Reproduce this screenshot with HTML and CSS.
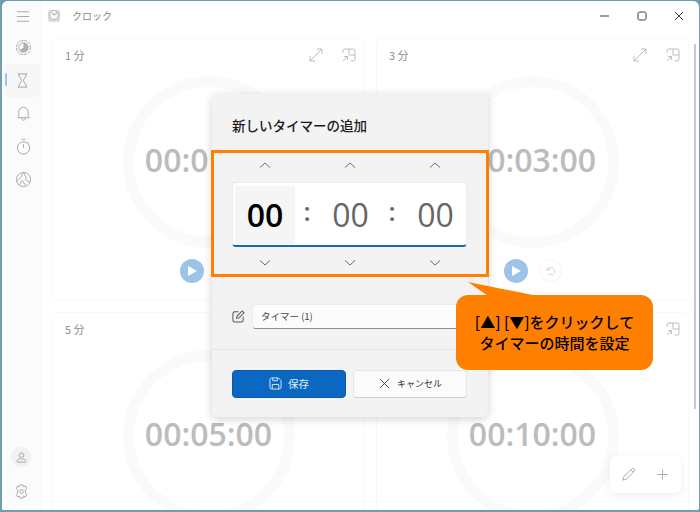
FILE: index.html
```html
<!DOCTYPE html>
<html lang="ja">
<head>
<meta charset="utf-8">
<title>クロック</title>
<link rel="stylesheet" href="styles.css">
</head>
<body>
<div class="window">
  <nav class="sidebar">
    <div class="nav-item nav-menu">
      <svg class="ico" viewBox="0 0 18 18"><path d="M2 4h13M2 9h13M2 14h13"/></svg>
    </div>
    <div class="nav-item">
      <svg class="ico" viewBox="0 0 18 18"><circle cx="9" cy="9" r="7.5" stroke-dasharray="3 1"/><circle cx="9" cy="9" r="5"/><path class="solid" d="M9 4a5 5 0 0 1 0 10 5 5 0 0 1-4-2l4-3z"/></svg>
    </div>
    <div class="nav-item active">
      <svg class="ico" viewBox="0 0 18 18"><path d="M4 2h10M4 16h10M5 2c0 4 3 5 3 7s-3 3-3 7M13 2c0 4-3 5-3 7s3 3 3 7"/></svg>
    </div>
    <div class="nav-item">
      <svg class="ico" viewBox="0 0 18 18"><path d="M3 13.5c1.500-1.500 1-3 1-6a5 5 0 0 1 10 0c0 3-.5 4.500 1 6zM7 13.500c0 3.500 4 3.500 4 0"/></svg>
    </div>
    <div class="nav-item">
      <svg class="ico" viewBox="0 0 18 18"><circle cx="9" cy="10.500" r="6.500"/><path d="M7 1.500h4M9 10.500V6.500M14 4.500l1 1"/></svg>
    </div>
    <div class="nav-item">
      <svg class="ico" viewBox="0 0 18 18"><circle cx="9" cy="9" r="7.500"/><path d="M9 1.500 6 7l-4 4M9 1.500 12 7l-1 2 4.500 3M4.500 15l3-5 4 5.500"/></svg>
    </div>
    <div class="nav-bottom">
      <div class="nav-user">
        <svg class="ico ico-sm" viewBox="0 0 14 14"><circle cx="7" cy="4.500" r="2.500"/><path d="M2.500 12c-1-3 1.500-3.500 4.500-3.500s5.500.5 4.500 3.500z"/></svg>
      </div>
      <div class="nav-gear">
        <svg class="ico" viewBox="0 0 18 18"><circle cx="9" cy="9" r="2"/><path d="M7.500 2h3l.5 2 2-.8 1.600 2.600-1.500 1.400v3.600l1.500 1.400-1.600 2.600-2-.8-.5 2h-3l-.5-2-2 .8-1.600-2.600 1.500-1.400V7.200L3.400 5.800 5 3.200l2 .8z"/></svg>
      </div>
    </div>
  </nav>

  <div class="main">
    <header class="titlebar">
      <div class="app-icon"><svg viewBox="0 0 14 14"><rect x="1" y="1" width="12" height="12" rx="2"/><circle cx="7" cy="6" r="4.500"/><path d="M7 6 5 3.500M7 6l3-2"/></svg></div>
      <span class="app-name">クロック</span>
      <div class="win-controls">
        <svg class="win-btn" viewBox="0 0 12 12"><path d="M1 6h9"/></svg>
        <svg class="win-btn" viewBox="0 0 12 12"><rect x="2" y="2" width="8" height="8" rx="1.500"/></svg>
        <svg class="win-btn" viewBox="0 0 12 12"><path d="M2 2l8 8M10 2l-8 8"/></svg>
      </div>
    </header>

    <div class="cards">
      <section class="card">
        <div class="card-head">
          <span class="card-title">1 分</span>
          <svg class="card-ico" viewBox="0 0 14 14"><path d="M1 13 13 1M8 1h5v5M1 8v5h5"/></svg>
          <svg class="card-ico" viewBox="0 0 14 14"><path d="M1 5V3a2 2 0 0 1 2-2h8a2 2 0 0 1 2 2v8a2 2 0 0 1-2 2H8.500M7 1v6h6M1 13l4-4M2 8.500h3.500V12"/></svg>
        </div>
        <div class="ring"><span class="time">00:01:00</span></div>
        <div class="card-actions">
          <span class="play"><i class="tri"></i></span>
          <span class="reset"><svg viewBox="0 0 12 12"><path d="M3 5.500a4 4 0 1 1 .5 3.500M2.500 2.500v3h3"/></svg></span>
        </div>
      </section>
      <section class="card">
        <div class="card-head">
          <span class="card-title">3 分</span>
          <svg class="card-ico" viewBox="0 0 14 14"><path d="M1 13 13 1M8 1h5v5M1 8v5h5"/></svg>
          <svg class="card-ico" viewBox="0 0 14 14"><path d="M1 5V3a2 2 0 0 1 2-2h8a2 2 0 0 1 2 2v8a2 2 0 0 1-2 2H8.500M7 1v6h6M1 13l4-4M2 8.500h3.500V12"/></svg>
        </div>
        <div class="ring"><span class="time">00:03:00</span></div>
        <div class="card-actions">
          <span class="play"><i class="tri"></i></span>
          <span class="reset"><svg viewBox="0 0 12 12"><path d="M3 5.500a4 4 0 1 1 .5 3.500M2.500 2.500v3h3"/></svg></span>
        </div>
      </section>
      <section class="card">
        <div class="card-head">
          <span class="card-title">5 分</span>
          <svg class="card-ico" viewBox="0 0 14 14"><path d="M1 13 13 1M8 1h5v5M1 8v5h5"/></svg>
          <svg class="card-ico" viewBox="0 0 14 14"><path d="M1 5V3a2 2 0 0 1 2-2h8a2 2 0 0 1 2 2v8a2 2 0 0 1-2 2H8.500M7 1v6h6M1 13l4-4M2 8.500h3.500V12"/></svg>
        </div>
        <div class="ring"><span class="time">00:05:00</span></div>
      </section>
      <section class="card">
        <div class="card-head">
          <span class="card-title">10 分</span>
          <svg class="card-ico" viewBox="0 0 14 14"><path d="M1 13 13 1M8 1h5v5M1 8v5h5"/></svg>
          <svg class="card-ico" viewBox="0 0 14 14"><path d="M1 5V3a2 2 0 0 1 2-2h8a2 2 0 0 1 2 2v8a2 2 0 0 1-2 2H8.500M7 1v6h6M1 13l4-4M2 8.500h3.500V12"/></svg>
        </div>
        <div class="ring"><span class="time">00:10:00</span></div>
      </section>
    </div>
  </div>

  <div class="scrollbar"></div>

  <div class="float-bar">
    <svg class="float-ico" viewBox="0 0 16 16"><path d="M2 14l.8-3.500L11.500 2a1.500 1.500 0 0 1 2.500 2.500L5.500 13.200zM10.500 3l2.500 2.500"/></svg>
    <svg class="float-ico" viewBox="0 0 16 16"><path d="M8 2.500v11M2.500 8h11"/></svg>
  </div>
</div>

<div class="dialog">
  <h2 class="dialog-title">新しいタイマーの追加</h2>
  <div class="chev-row">
    <svg class="chev" viewBox="0 0 12 8"><path d="M1 6.500 6 2l5 4.500"/></svg>
    <svg class="chev" viewBox="0 0 12 8"><path d="M1 6.500 6 2l5 4.500"/></svg>
    <svg class="chev" viewBox="0 0 12 8"><path d="M1 6.500 6 2l5 4.500"/></svg>
  </div>
  <div class="picker">
    <span class="digit digit-on">00</span>
    <span class="colon">:</span>
    <span class="digit">00</span>
    <span class="colon">:</span>
    <span class="digit">00</span>
  </div>
  <div class="chev-row chev-low">
    <svg class="chev" viewBox="0 0 12 8"><path d="M1 1.500 6 6l5-4.500"/></svg>
    <svg class="chev" viewBox="0 0 12 8"><path d="M1 1.500 6 6l5-4.500"/></svg>
    <svg class="chev" viewBox="0 0 12 8"><path d="M1 1.500 6 6l5-4.500"/></svg>
  </div>
  <div class="name-row">
    <svg class="name-ico" viewBox="0 0 14 14"><path d="M7 2H3a2 2 0 0 0-2 2v7a2 2 0 0 0 2 2h7a2 2 0 0 0 2-2V7M5 9l.5-2.500L11 1l2 2-5.500 5.500z"/></svg>
    <div class="name-input">タイマー (1)</div>
  </div>
  <div class="dialog-foot">
    <button class="btn btn-save">
      <svg class="btn-ico" viewBox="0 0 14 14"><path d="M1 3a2 2 0 0 1 2-2h7l3 3v7a2 2 0 0 1-2 2H3a2 2 0 0 1-2-2zM4 1v3h5V1M3.500 13V8h7v5"/></svg>
      保存
    </button>
    <button class="btn btn-cancel">
      <svg class="btn-ico" viewBox="0 0 14 14"><path d="M2 2l10 10M12 2 2 12"/></svg>
      キャンセル
    </button>
  </div>
</div>

<div class="highlight"></div>

<div class="callout">
  <svg class="callout-tail" viewBox="0 0 70 14"><polygon points="0,0 70,14 20,14"/></svg>
  [▲] [▼]をクリックして<br>タイマーの時間を設定
</div>
</body>
</html>
```

FILE: styles.css
```css
* {
  box-sizing: border-box;
}

body {
  margin: 0;
  width: 700px;
  height: 512px;
  overflow: hidden;
  position: relative;
  background-color: #6f9fae;
  font-family: "Noto Sans CJK JP", "Noto Sans", sans-serif;
}

svg {
  display: block;
  fill: none;
}

/* window */
.window {
  position: relative;
  display: flex;
  height: 509px;
  margin: 1px 1px 2px 2px;
  border-radius: 6px 6px 2px 2px;
  overflow: hidden;
  background-color: #fff;
}

.sidebar {
  display: flex;
  flex-direction: column;
  width: 40px;
  flex: none;
  background-color: #fbfbfb;
}

.nav-item {
  display: flex;
  align-items: center;
  justify-content: center;
  position: relative;
  height: 33px;
  padding-left: 2px;
}

.nav-menu {
  height: 30px;
}

.nav-item.active {
  background-color: #f6f6f6;
  border-radius: 4px;
  margin-left: 3px;
  margin-right: 2px;
  padding-left: 0;
}

.nav-item.active::before {
  content: "";
  position: absolute;
  left: 0;
  top: 9px;
  width: 2px;
  height: 13px;
  border-radius: 1px;
  background-color: #9cc6ee;
}

.ico {
  width: 17px;
  height: 17px;
}

.ico path,
.ico circle {
  stroke: #a5a5a5;
  stroke-width: 1;
}

.ico path.solid {
  fill: #b0b0b0;
  stroke: none;
}

.ico-sm {
  width: 13px;
  height: 13px;
}

.nav-bottom {
  margin-top: auto;
  padding-left: 9px;
  padding-bottom: 10px;
}

.nav-user {
  display: flex;
  align-items: center;
  justify-content: center;
  width: 20px;
  height: 20px;
  border-radius: 50%;
  background-color: #f1f1f1;
}

.nav-gear {
  margin-top: 16px;
  padding-left: 2px;
}

.main {
  flex: 1;
  min-width: 0;
}

.titlebar {
  display: flex;
  align-items: center;
  height: 37px;
  padding-left: 5px;
  padding-bottom: 8px;
}

.app-icon svg {
  width: 14px;
  height: 14px;
}

.app-icon rect {
  fill: #dcdcdc;
}

.app-icon circle {
  fill: #f7f7f7;
  stroke: #b5b5b5;
}

.app-icon path {
  stroke: #999;
}

.app-name {
  margin-left: 11px;
  font-size: 10px;
  color: #8a8a8a;
}

.win-controls {
  display: flex;
  gap: 25px;
  margin-left: auto;
  padding-right: 14px;
}

.win-btn {
  width: 12px;
  height: 12px;
}

.win-btn path,
.win-btn rect {
  stroke: #3c3c3c;
  stroke-width: 1;
}

/* timer cards */
.cards {
  display: grid;
  grid-template-columns: 313px 313px;
  grid-auto-rows: 263px;
  gap: 11px;
  padding-left: 10px;
}

.card {
  display: flex;
  flex-direction: column;
  align-items: center;
  border: 1px solid #f8f8f8;
  border-radius: 6px;
  background-color: #fff;
}

.card-head {
  display: flex;
  align-items: flex-start;
  align-self: stretch;
  height: 37px;
  padding: 9px 8px 0 12px;
  gap: 19px;
}

.card-title {
  margin-right: auto;
  font-size: 11px;
  line-height: 14px;
  color: #8c8c8c;
}

.card-ico {
  width: 14px;
  height: 14px;
}

.card-ico path {
  stroke: #bdbdbd;
  stroke-width: 1;
}

.ring {
  display: flex;
  align-items: center;
  justify-content: center;
  width: 172px;
  height: 172px;
  flex: none;
  padding-bottom: 6px;
  border: 11px solid #fafafa;
  border-radius: 50%;
}

.time {
  font-family: "Open Sans", sans-serif;
  font-size: 32px;
  font-weight: 600;
  white-space: nowrap;
  color: #bcbcbc;
}

.card-actions {
  display: flex;
  gap: 11px;
  margin-top: 11px;
}

.play {
  display: flex;
  align-items: center;
  justify-content: center;
  width: 24px;
  height: 24px;
  border-radius: 50%;
  background-color: #9dc4e8;
}

.tri {
  margin-left: 2px;
  border-left: 9px solid #fff;
  border-top: 5.500px solid transparent;
  border-bottom: 5.500px solid transparent;
}

.reset {
  display: flex;
  align-items: center;
  justify-content: center;
  width: 23px;
  height: 23px;
  border: 1px solid #f6f6f6;
  border-radius: 50%;
}

.reset svg {
  width: 11px;
  height: 11px;
}

.reset path {
  stroke: #cdcdcd;
}

.scrollbar {
  position: absolute;
  left: 692px;
  top: 43px;
  width: 2px;
  height: 365px;
  background-color: #c8c8c8;
}

.float-bar {
  position: absolute;
  left: 608px;
  top: 455px;
  display: flex;
  align-items: center;
  justify-content: center;
  gap: 19px;
  width: 71px;
  height: 37px;
  border-radius: 6px;
  background-color: #fff;
  box-shadow: 0 2px 8px rgba(0, 0, 0, 0.08);
}

.float-ico {
  width: 15px;
  height: 15px;
}

.float-ico path {
  stroke: #a8a8a8;
}

/* dialog */
.dialog {
  position: absolute;
  left: 212px;
  top: 94px;
  width: 276px;
  height: 323px;
  padding-top: 19px;
  border-radius: 6px;
  background-color: #f3f3f3;
  box-shadow: 0 2px 10px rgba(0, 0, 0, 0.18);
}

.dialog-title {
  margin: 0 0 18px 20px;
  font-size: 13.500px;
  font-weight: 500;
  line-height: 24px;
  color: #1b1b1b;
}

.chev-row {
  display: grid;
  grid-template-columns: 85px 85px 85px;
  justify-items: center;
  align-items: center;
  height: 20px;
  padding-left: 10px;
}

.chev-low {
  margin-top: 6px;
}

.chev {
  width: 12px;
  height: 8px;
}

.chev path {
  stroke: #6d6d6d;
  stroke-width: 1;
}

.picker {
  display: grid;
  grid-template-columns: 60px 26px 59px 26px 59px;
  align-items: center;
  width: 235px;
  height: 65px;
  margin: 7px 0 0 20px;
  padding: 3px 2px 3px 2px;
  border: 1px solid #ececec;
  border-bottom: 2px solid #0f6cbd;
  border-radius: 4px;
  background-color: #fff;
}

.digit {
  font-family: "Open Sans", sans-serif;
  font-size: 32px;
  font-weight: 500;
  line-height: 58px;
  text-align: center;
  color: #666;
}

.digit-on {
  border-radius: 2px;
  font-weight: 600;
  color: #000;
  background-color: #f5f5f5;
}

.colon {
  padding-right: 2px;
  padding-bottom: 8px;
  font-family: "Open Sans", sans-serif;
  font-size: 26px;
  font-weight: 600;
  text-align: center;
  color: #666;
}

.name-row {
  display: flex;
  align-items: center;
  margin: 31px 0 0 20px;
}

.name-ico {
  width: 13px;
  height: 13px;
}

.name-ico path {
  stroke: #555;
  stroke-width: 1.100;
}

.name-input {
  width: 218px;
  height: 25px;
  margin-left: 7px;
  padding-left: 8px;
  border: 1px solid #ececec;
  border-bottom: 1px solid #8f8f8f;
  border-radius: 4px;
  font-size: 9.500px;
  line-height: 23px;
  color: #444;
  background-color: #fbfbfb;
}

.dialog-foot {
  display: flex;
  align-items: center;
  gap: 7px;
  height: 68px;
  margin-top: 20px;
  padding: 0 21px 0 20px;
  border-top: 1px solid #e5e5e5;
}

.btn {
  display: flex;
  align-items: center;
  justify-content: center;
  gap: 6px;
  flex: 1;
  height: 28px;
  padding: 0;
  border-radius: 4px;
  font-family: "Noto Sans CJK JP", sans-serif;
  font-size: 10.500px;
}

.btn-ico {
  width: 13px;
  height: 13px;
}

.btn-save {
  border: 1px solid #0a5aa8;
  color: #e3eefa;
  background-color: #0a67c2;
}

.btn-save .btn-ico path {
  stroke: #e3eefa;
}

.btn-cancel {
  border: 1px solid #e6e6e6;
  border-bottom-color: #cfcfcf;
  font-size: 9px;
  color: #333;
  background-color: #fbfbfb;
}

.btn-cancel .btn-ico path {
  stroke: #444;
}

/* annotation */
.highlight {
  position: absolute;
  left: 211px;
  top: 150px;
  width: 278px;
  height: 127px;
  border: 3px solid #ff8000;
}

.callout {
  position: absolute;
  left: 456px;
  top: 295px;
  width: 197px;
  height: 75px;
  padding-top: 16px;
  border-radius: 12px;
  font-size: 15px;
  font-weight: 500;
  line-height: 21px;
  text-align: center;
  color: #000;
  background-color: #ff8000;
}

.callout-tail {
  position: absolute;
  left: 12px;
  top: -13px;
  width: 70px;
  height: 14px;
}

.callout-tail polygon {
  fill: #ff8000;
}
```
